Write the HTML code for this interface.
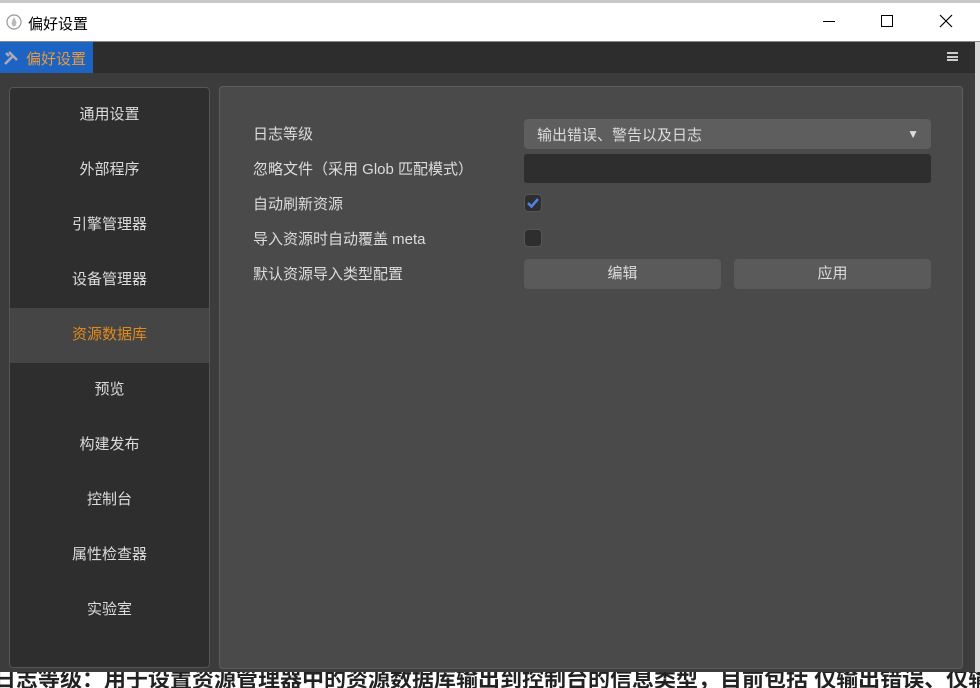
<!DOCTYPE html>
<html><head><meta charset="utf-8"><style>
*{margin:0;padding:0;box-sizing:border-box}
body{width:980px;height:688px;overflow:hidden;background:#3c3c3c;font-family:"Liberation Sans","Noto Sans CJK SC",sans-serif;position:relative}
.title{position:absolute;left:0;top:0;width:980px;height:42px;background:#fff;border-top:3px solid #c8c8c8;border-bottom:1px solid #888}
.title .t{position:absolute;left:28px;top:10px;font-size:15px;color:#000}
.tabbar{position:absolute;left:0;top:42px;width:975px;height:31px;background:#2d2d2d}
.tab{position:absolute;left:0;top:0;width:93px;height:31px;background:#1c63c2;color:#e89a3c;font-size:15px;padding:6px 0 0 26px}
.sb{position:absolute;left:975px;top:42px;width:5px;height:630px;background:#d8d8d8}
.side{position:absolute;left:9px;top:87px;width:201px;height:581px;background:#2e2e2e;border:1px solid #555;border-radius:4px;overflow:hidden}
.item{height:55px;line-height:54px;text-align:center;color:#dcdcdc;font-size:15px}
.item.a{background:#454545;color:#e08a1e}
.panel{position:absolute;left:219px;top:86px;width:744px;height:583px;background:#4a4a4a;border:1px solid #5e5e5e;border-radius:4px}
.lbl{position:absolute;left:33px;color:#dcdcdc;font-size:15px}
.sel{position:absolute;left:304px;top:32px;width:407px;height:30px;background:#5e5e5e;border-radius:4px;color:#dcdcdc;font-size:15px;padding:5px 0 0 13px}
.inp{position:absolute;left:304px;top:67px;width:407px;height:29px;background:#2e2e2e;border-radius:3px}
.cb{position:absolute;left:304px;width:18px;height:18px;background:#2e2e2e;border:1px solid #555;border-radius:4px}
.btn{position:absolute;top:172px;height:30px;background:#5a5a5a;border-radius:4px;color:#dcdcdc;font-size:15px;text-align:center;line-height:29px}
.bottom{position:absolute;left:0;top:672px;width:980px;height:16px;background:#fff;overflow:hidden}
.bottom span{position:absolute;top:-10px;left:-6px;font-size:22px;color:#222;white-space:nowrap;font-weight:bold}
</style></head><body>
<div class="title">
<svg style="position:absolute;left:6px;top:11px" width="16" height="16" viewBox="0 0 16 16"><circle cx="8" cy="8" r="7" fill="none" stroke="#999" stroke-width="1.2"/><path d="M8 3 C6 7 5 9 6 11 C7 13 9 13 10 11 C11 9 10 7 8 3Z" fill="#bbb"/></svg>
<div class="t">偏好设置</div>
<div style="position:absolute;left:823px;top:18px;width:12px;height:1px;background:#000"></div>
<div style="position:absolute;left:881px;top:12px;width:12px;height:12px;border:1px solid #000"></div>
<svg style="position:absolute;left:939px;top:11px" width="14" height="14"><path d="M1 1L13 13M13 1L1 13" stroke="#000" stroke-width="1.2"/></svg>
</div>
<div class="tabbar"><div class="tab">偏好设置</div>
<svg style="position:absolute;left:3px;top:8px" width="16" height="16" viewBox="0 0 16 16"><path d="M2 14L10 6M6 2l8 8M3 3l3 3" stroke="#aab" stroke-width="2.5"/></svg>
<div style="position:absolute;left:947px;top:10px;width:11px;height:9px;border-top:2px solid #ccc;border-bottom:2px solid #ccc"><div style="margin-top:1.5px;height:2px;background:#ccc"></div></div>
</div>
<div class="sb"></div>
<div class="side">
<div class="item">通用设置</div><div class="item">外部程序</div><div class="item">引擎管理器</div><div class="item">设备管理器</div><div class="item a">资源数据库</div><div class="item">预览</div><div class="item">构建发布</div><div class="item">控制台</div><div class="item">属性检查器</div><div class="item">实验室</div>
</div>
<div class="panel">
<div class="lbl" style="top:36px">日志等级</div>
<div class="lbl" style="top:71px">忽略文件（采用 Glob 匹配模式）</div>
<div class="lbl" style="top:106px">自动刷新资源</div>
<div class="lbl" style="top:141px">导入资源时自动覆盖 meta</div>
<div class="lbl" style="top:176px">默认资源导入类型配置</div>
<div class="sel">输出错误、警告以及日志<span style="position:absolute;right:12px;top:8px;font-size:12px">▼</span></div>
<div class="inp"></div>
<div class="cb" style="top:107px"><svg width="16" height="16" viewBox="0 0 16 16"><path d="M3 8l3.5 3.5L13 4" stroke="#4a86e8" stroke-width="2.5" fill="none"/></svg></div>
<div class="cb" style="top:142px"></div>
<div class="btn" style="left:304px;width:197px">编辑</div>
<div class="btn" style="left:514px;width:197px">应用</div>
</div>
<div class="bottom"><span>日志等级：用于设置资源管理器中的资源数据库输出到控制台的信息类型，目前包括 仅输出错误、仅输出错误</span></div>
</body></html>
